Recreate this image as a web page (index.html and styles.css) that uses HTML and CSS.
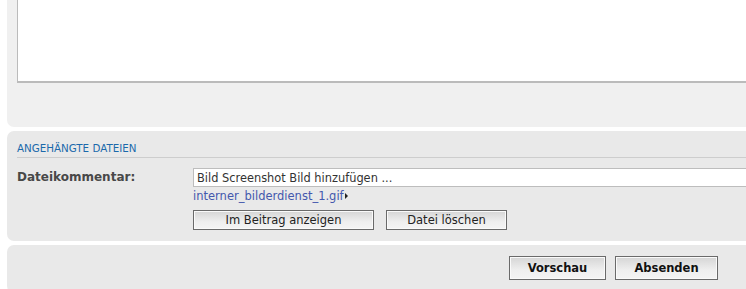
FILE: index.html
```html
<!DOCTYPE html>
<html lang="de">
<head>
    <meta charset="UTF-8">
    <title>Beitrag schreiben</title>
<link rel="stylesheet" href="styles.css">
</head>
<body>
    <div class="page">
        <div class="panel editor">
            <div class="message"></div>
        </div>

        <div class="panel attach">
            <h3 class="head">Angehängte Dateien</h3>
            <div class="row">
                <div class="label">Dateikommentar:</div>
                <div class="field">
                    <input class="comment" type="text" value="Bild Screenshot Bild hinzufügen ...">
                    <a class="file" href="#">interner_bilderdienst_1.gif</a>
                    <div class="actions">
                        <button class="btn wide">Im Beitrag anzeigen</button>
                        <button class="btn">Datei löschen</button>
                    </div>
                </div>
            </div>
        </div>

        <div class="panel submit">
            <button class="btn strong preview">Vorschau</button>
            <button class="btn strong send">Absenden</button>
        </div>
    </div>
</body>
</html>
```

FILE: styles.css
```css
body{
    margin: 0;
    background-color: #fff;
    font-family: "DejaVu Sans", Verdana, sans-serif;
    font-size: 11.5px;
    color: #333;
    overflow: hidden;
}
.page{
    padding-left: 7px;
}
.panel{
    background-color: #e9e9e9;
    border-radius: 7px 0 0 7px;
}
.editor{
    background-color: #f0f0f0;
    height: 127px;
    border-radius: 0 0 0 7px;
    padding-left: 10px;
}
.message{
    height: 81px;
    background-color: #fff;
    border-left: 1px solid #bbb;
    border-bottom: 2px solid #bbb;
}
.attach{
    margin-top: 4px;
    height: 110px;
    padding-left: 10px;
}
.head{
    margin: 0;
    padding-top: 10px;
    font-size: 10.3px;
    font-weight: normal;
    line-height: 14px;
    text-transform: uppercase;
    color: #1b69ab;
    border-bottom: 1px solid #cdcdcd;
    padding-bottom: 2px;
}
.row{
    display: flex;
    margin-top: 10px;
}
.label{
    width: 176px;
    font-size: 12px;
    font-weight: bold;
    color: #484848;
    line-height: 16px;
    padding-top: 1px;
}
.field{
    flex: 1;
    display: flex;
    flex-direction: column;
    align-items: flex-start;
}
.comment{
    box-sizing: border-box;
    width: 100%;
    height: 19px;
    margin: 0;
    padding: 0 3px;
    border: 1px solid #bdbdbd;
    border-right: none;
    font-family: inherit;
    font-size: 11.4px;
    color: #333;
    outline: none;
}
.file{
    margin-top: 2px;
    line-height: 14px;
    color: #4458ad;
    text-decoration: none;
}
.file::after{
    content: "";
    display: inline-block;
    width: 0;
    height: 0;
    margin-left: 1px;
    border-left: 3px solid #222;
    border-top: 3px solid transparent;
    border-bottom: 3px solid transparent;
    vertical-align: 1px;
}
.actions{
    display: flex;
    gap: 12px;
    margin-top: 7px;
}
.btn{
    box-sizing: border-box;
    height: 20px;
    padding: 0;
    border: 1px solid #6a6a6a;
    background: linear-gradient(#d5d5d5, #efefef 60%, #f4f4f4);
    box-shadow: inset 0 0 0 1px #fafafa;
    font-family: inherit;
    font-size: 11.5px;
    color: #222;
    width: 121px;
}
.btn.wide{
    width: 181px;
}
.submit{
    margin-top: 4px;
    height: 48px;
    display: flex;
    justify-content: flex-end;
    align-items: flex-start;
    gap: 9px;
    padding-top: 11px;
    padding-right: 28px;
    box-sizing: border-box;
}
.btn.strong{
    height: 24px;
    font-weight: bold;
    color: #111;
}
.preview{
    width: 97px;
}
.send{
    width: 103px;
}
```
